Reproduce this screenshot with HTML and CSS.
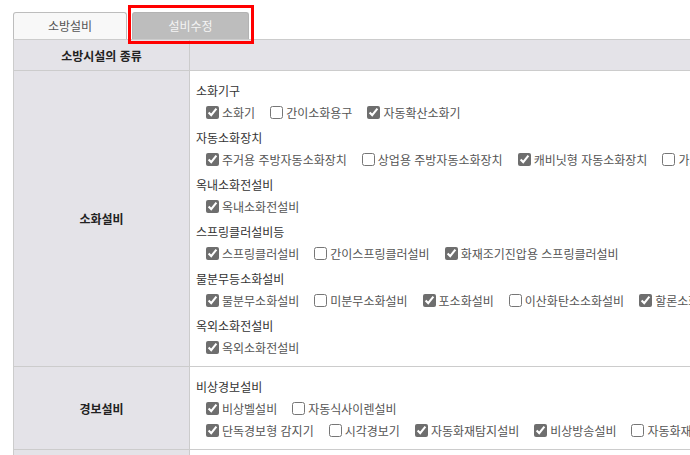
FILE: index.html
```html
<!DOCTYPE html>
<html lang="ko">
<head>
<meta charset="utf-8">
<title>소방설비</title>
<link rel="stylesheet" href="styles.css">
</head>
<body>
<div class="page">
  <div class="tabs">
    <div class="tab">소방설비</div>
    <div class="tab tab-active">설비수정<span class="highlight"></span></div>
  </div>
  <table class="facilities">
    <colgroup><col class="col-kind"><col></colgroup>
    <thead>
      <tr><th class="head">소방시설의 종류</th><th class="head"></th></tr>
    </thead>
    <tbody>
      <tr>
        <th class="cat">소화설비</th>
        <td class="opts">
          <div class="group">
            <div class="group-title">소화기구</div>
            <div class="opt-line">
              <label class="opt"><input type="checkbox" checked>소화기</label>
              <label class="opt"><input type="checkbox">간이소화용구</label>
              <label class="opt"><input type="checkbox" checked>자동확산소화기</label>
            </div>
          </div>
          <div class="group">
            <div class="group-title">자동소화장치</div>
            <div class="opt-line">
              <label class="opt"><input type="checkbox" checked>주거용 주방자동소화장치</label>
              <label class="opt"><input type="checkbox">상업용 주방자동소화장치</label>
              <label class="opt"><input type="checkbox" checked>캐비닛형 자동소화장치</label>
              <label class="opt"><input type="checkbox">가스자동소화장치</label>
            </div>
          </div>
          <div class="group">
            <div class="group-title">옥내소화전설비</div>
            <div class="opt-line">
              <label class="opt"><input type="checkbox" checked>옥내소화전설비</label>
            </div>
          </div>
          <div class="group">
            <div class="group-title">스프링클러설비등</div>
            <div class="opt-line">
              <label class="opt"><input type="checkbox" checked>스프링클러설비</label>
              <label class="opt"><input type="checkbox">간이스프링클러설비</label>
              <label class="opt"><input type="checkbox" checked>화재조기진압용 스프링클러설비</label>
            </div>
          </div>
          <div class="group">
            <div class="group-title">물분무등소화설비</div>
            <div class="opt-line">
              <label class="opt"><input type="checkbox" checked>물분무소화설비</label>
              <label class="opt"><input type="checkbox">미분무소화설비</label>
              <label class="opt"><input type="checkbox" checked>포소화설비</label>
              <label class="opt"><input type="checkbox">이산화탄소소화설비</label>
              <label class="opt"><input type="checkbox" checked>할론소화설비</label>
            </div>
          </div>
          <div class="group">
            <div class="group-title">옥외소화전설비</div>
            <div class="opt-line">
              <label class="opt"><input type="checkbox" checked>옥외소화전설비</label>
            </div>
          </div>
        </td>
      </tr>
      <tr>
        <th class="cat">경보설비</th>
        <td class="opts">
          <div class="group">
            <div class="group-title">비상경보설비</div>
            <div class="opt-line">
              <label class="opt"><input type="checkbox" checked>비상벨설비</label>
              <label class="opt"><input type="checkbox">자동식사이렌설비</label>
            </div>
            <div class="opt-line">
              <label class="opt"><input type="checkbox" checked>단독경보형 감지기</label>
              <label class="opt"><input type="checkbox">시각경보기</label>
              <label class="opt"><input type="checkbox" checked>자동화재탐지설비</label>
              <label class="opt"><input type="checkbox" checked>비상방송설비</label>
              <label class="opt"><input type="checkbox">자동화재속보설비</label>
            </div>
          </div>
        </td>
      </tr>
      <tr>
        <th class="cat">피난구조설비</th>
        <td class="opts">
          <div class="group">
            <div class="group-title">피난기구</div>
          </div>
        </td>
      </tr>
    </tbody>
  </table>
</div>
</body>
</html>
```

FILE: styles.css
```css
* { box-sizing: border-box; }

html, body {
  margin: 0;
  background: #ffffff;
  overflow: hidden;
}

body {
  font-family: "Noto Sans CJK KR", "Noto Sans", sans-serif;
  font-size: 12px;
  color: #333;
}

.page {
  padding: 12px 0 0 13px;
  width: 1100px;
}

.tabs {
  display: flex;
  height: 27px;
}

.tab {
  width: 114px;
  height: 27px;
  border: 1px solid #bdbdbd;
  border-bottom: 0;
  border-radius: 3px 3px 0 0;
  background: #f8f8f8;
  color: #555;
  text-align: center;
  line-height: 25px;
}

.tab-active {
  position: relative;
  margin-left: 5px;
  width: 117px;
  background: #bdbdbd;
  border-color: #b3b3b3;
  color: #f4f4f4;
}

.highlight {
  position: absolute;
  left: -5px;
  top: -8px;
  width: 126px;
  height: 39px;
  border: 3px solid #ff0000;
}

.facilities {
  border-collapse: collapse;
  width: 1000px;
  table-layout: fixed;
}

.col-kind { width: 176px; }

.facilities th,
.facilities td {
  border: 1px solid #cccccc;
  padding: 0;
}

.head {
  background: #e4e3e8;
  height: 31px;
  font-weight: 700;
  color: #222;
  text-align: center;
}

.cat {
  background: #e4e3e8;
  font-weight: 700;
  color: #222;
  text-align: center;
  vertical-align: middle;
}

.opts {
  padding: 10px 6px 8px 6px !important;
  white-space: nowrap;
  vertical-align: top;
}

.group + .group { margin-top: 5px; }

.group-title {
  line-height: 20px;
  color: #333;
}

.opt-line {
  display: flex;
  align-items: center;
  height: 22px;
  padding-left: 6px;
}

.opt {
  display: inline-flex;
  align-items: center;
  margin-right: 11px;
  color: #555;
}

.opt input {
  width: 13px;
  height: 13px;
  margin: 0 3px 0 4px;
  accent-color: #6e6e6e;
}
```
